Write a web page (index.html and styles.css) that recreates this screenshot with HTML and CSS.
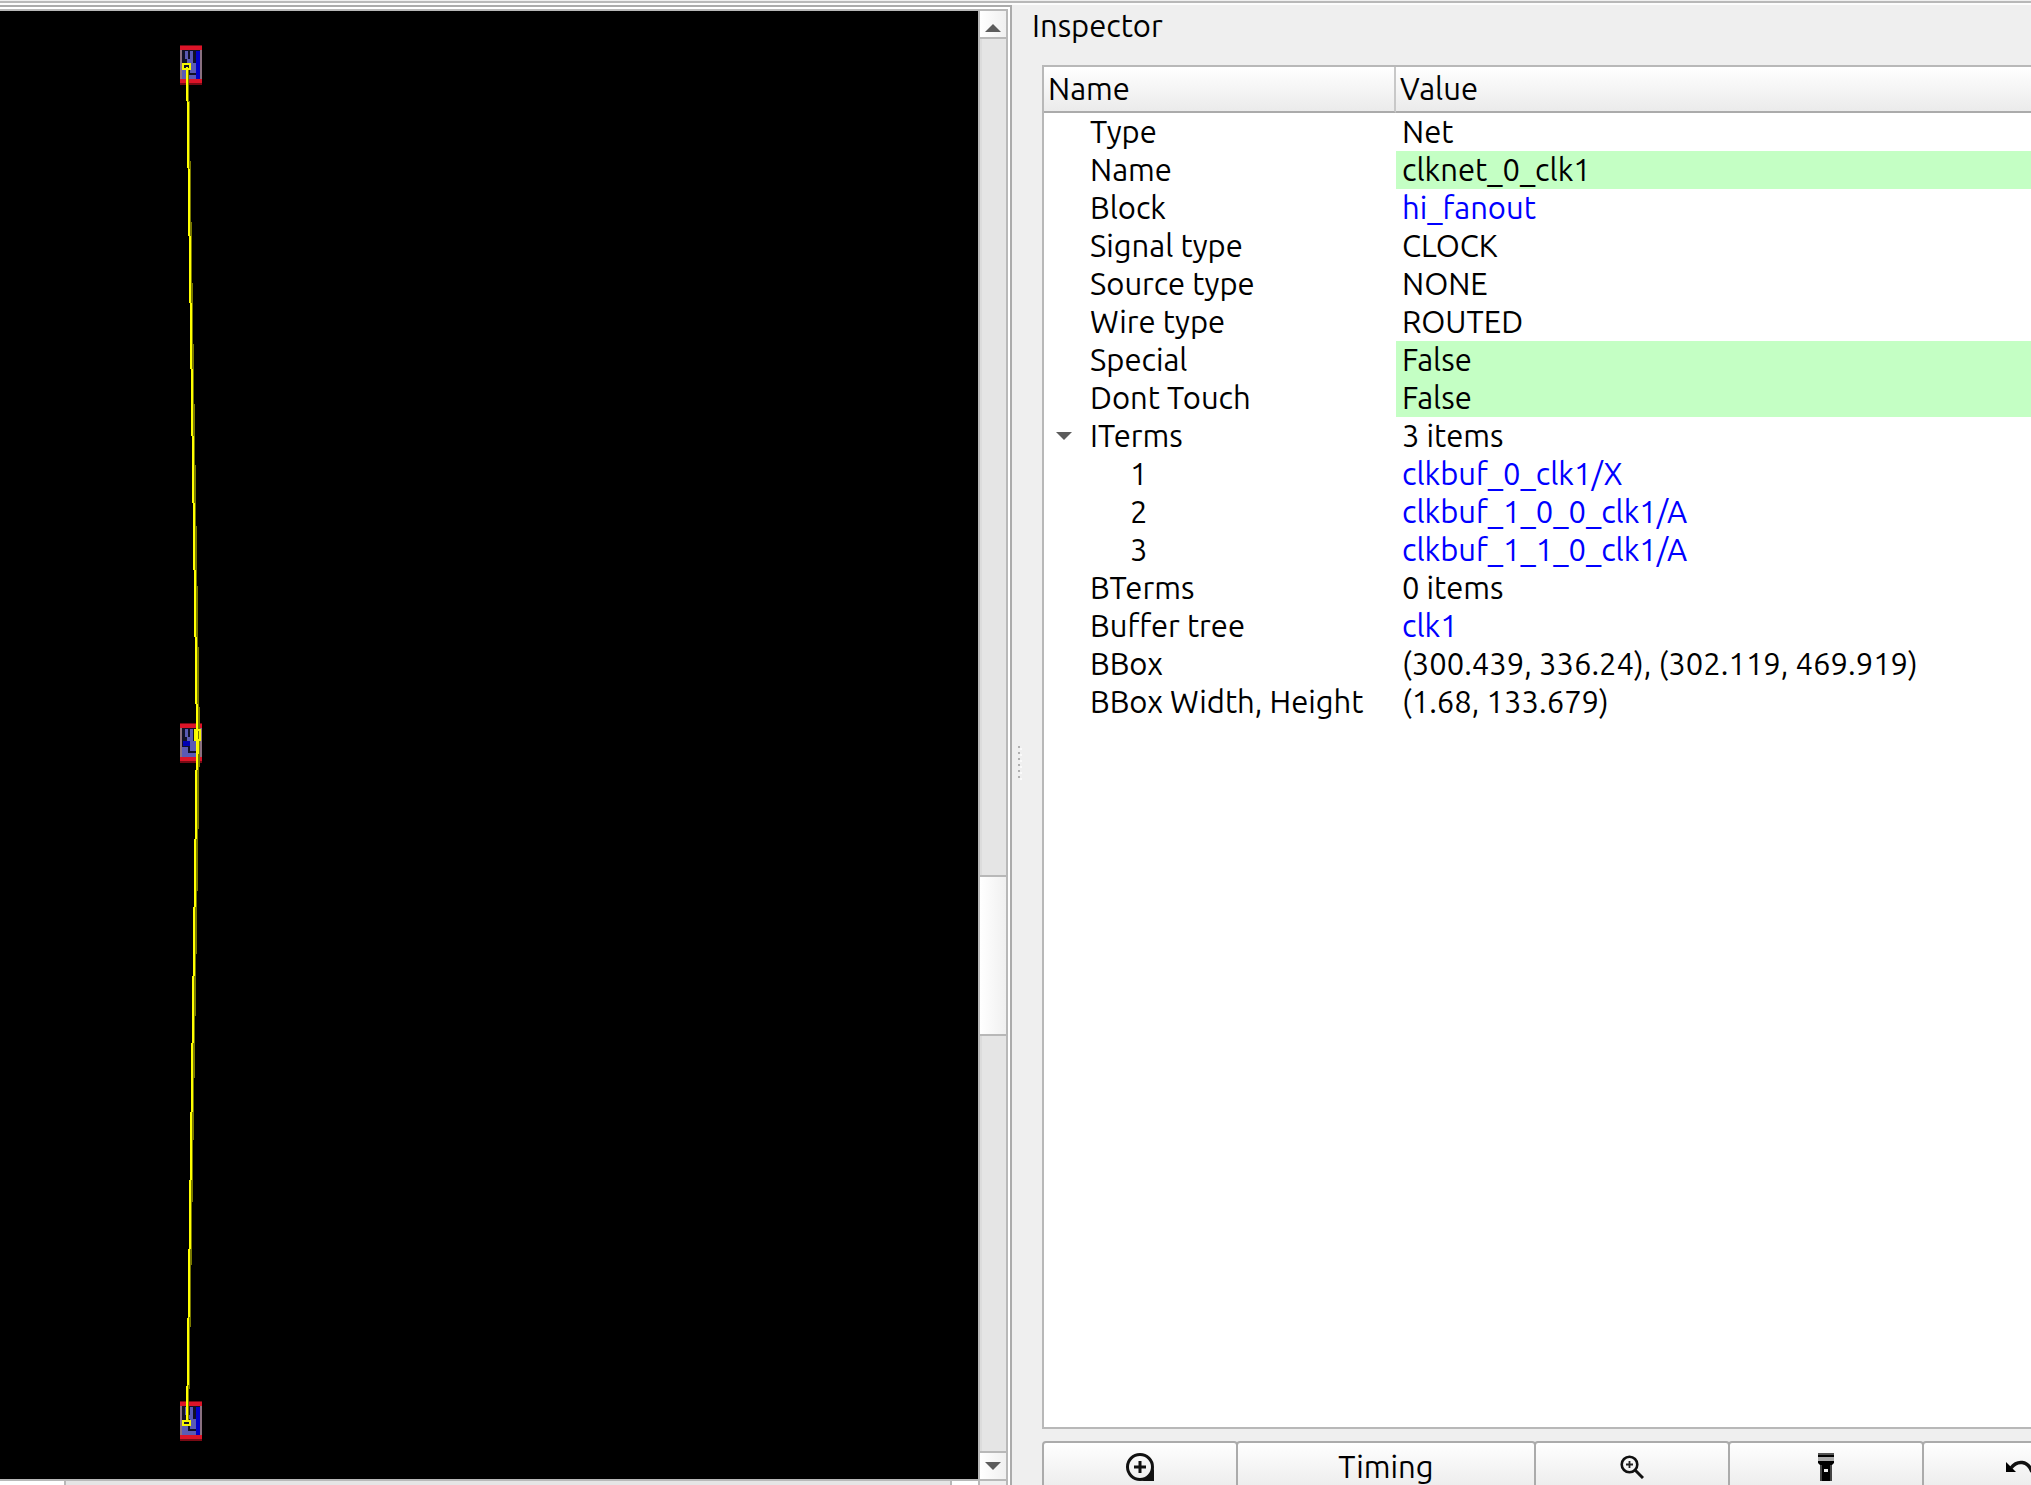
FILE: index.html
```html
<!DOCTYPE html>
<html lang="en">
<head>
<meta charset="utf-8">
<title>Inspector</title>
<link rel="stylesheet" href="styles.css">
</head>
<body>
<div class="window">
  <main class="viewer">
    <div class="viewer-frame">
      <div class="canvas">
        <svg class="layout" role="img" aria-label="Clock net layout" shape-rendering="crispEdges">
          <defs>
            <g id="cell">
              <rect width="22" height="40" fill="#8a7080"/>
              <rect x="2" y="5" width="18" height="30" fill="#101026"/>
              <path d="M5 6h3v8h-3zM10 6h3v9h-3zM7 14h6v4h-6zM10 18h6v10h-6zM2 24h6v10h-6zM8 30h8v5h-8z" fill="#5a5ab4"/>
              <path d="M0 0h22v5h-22zM0 34h22v5h-22z" fill="#dc1428"/>
              <path d="M0 0h22v1h-22zM0 38h22v2h-22z" fill="#780a14"/>
            </g>
          </defs>
          <use href="#cell" x="180" y="34"/>
          <rect x="196" y="40" width="4" height="28" fill="#0000c8"/>
          <use href="#cell" x="180" y="712"/>
          <rect x="183" y="730" width="7" height="5" fill="#0000b4"/>
          <use href="#cell" x="180" y="1390"/>
          <rect x="196" y="1396" width="4" height="28" fill="#0000c8"/>
          <path d="M188 58L199 726L188 1410" fill="none" stroke="#787800" stroke-width="2"/>
          <path d="M187 56L197 726L187 1410" fill="none" stroke="#ff0" stroke-width="2"/>
          <path d="M183 53h7v5h-7zM183 1410h7v4h-7zM195 719h5v10h-5zM198 729v14" fill="none" stroke="#f5f500" stroke-width="2"/>
        </svg>
      </div>
      <div class="vscroll" aria-hidden="true">
        <div class="step up"><svg width="16" height="8"><path d="M8 0L16 8H0z"/></svg></div>
        <div class="track before"></div>
        <div class="thumb"></div>
        <div class="track after"></div>
        <div class="step down"><svg width="16" height="8"><path d="M0 0H16L8 8z"/></svg></div>
      </div>
      <div class="hscroll" aria-hidden="true"><div class="hthumb"></div><div class="htrack"></div><div class="hstep"></div></div>
      <div class="corner"></div>
    </div>
  </main>
  <div class="splitter" aria-hidden="true"><i></i><i></i><i></i><i></i><i></i><i></i></div>
  <aside class="inspector">
    <h1 class="title">Inspector</h1>
    <div class="tree">
      <table class="props">
        <colgroup><col class="col-name"><col></colgroup>
        <thead><tr><th scope="col">Name</th><th scope="col">Value</th></tr></thead>
        <tbody>
          <tr><td>Type</td><td>Net</td></tr>
          <tr><td>Name</td><td class="editable">clknet_0_clk1</td></tr>
          <tr><td>Block</td><td><a href="#block">hi_fanout</a></td></tr>
          <tr><td>Signal type</td><td>CLOCK</td></tr>
          <tr><td>Source type</td><td>NONE</td></tr>
          <tr><td>Wire type</td><td>ROUTED</td></tr>
          <tr><td>Special</td><td class="editable">False</td></tr>
          <tr><td>Dont Touch</td><td class="editable">False</td></tr>
          <tr><td class="parent"><button class="toggle" aria-label="Collapse ITerms"><svg width="16" height="8"><path d="M0 0H16L8 8z"/></svg></button>ITerms</td><td>3 items</td></tr>
          <tr><td class="child">1</td><td><a href="#iterm1">clkbuf_0_clk1/X</a></td></tr>
          <tr><td class="child">2</td><td><a href="#iterm2">clkbuf_1_0_0_clk1/A</a></td></tr>
          <tr><td class="child">3</td><td><a href="#iterm3">clkbuf_1_1_0_clk1/A</a></td></tr>
          <tr><td>BTerms</td><td>0 items</td></tr>
          <tr><td>Buffer tree</td><td><a href="#clk1">clk1</a></td></tr>
          <tr><td>BBox</td><td>(300.439, 336.24), (302.119, 469.919)</td></tr>
          <tr><td>BBox Width, Height</td><td>(1.68, 133.679)</td></tr>
        </tbody>
      </table>
    </div>
    <div class="actions">
      <button class="action" aria-label="Zoom to"><svg width="28" height="28" viewBox="0 0 28 28"><path d="M14 1.500A12.500 12.500 0 1 0 14 26.500A12.500 12.500 0 0 0 14 1.500M14 8v12M8 14h12" fill="none" stroke="#111" stroke-width="3"/><path d="M28 14v14H14C21 27 27 21 28 14z" fill="#111"/></svg></button>
      <button class="action wide">Timing</button>
      <button class="action" aria-label="Zoom in"><svg width="24" height="24" viewBox="0 0 24 24"><circle cx="9.500" cy="9.500" r="7.800" fill="none" stroke="#111" stroke-width="2.600"/><path d="M9.500 6v7M6 9.500h7" stroke="#222" stroke-width="1.800"/><path d="M15 15l8 8" stroke="#111" stroke-width="3"/></svg></button>
      <button class="action" aria-label="Highlight"><svg width="16" height="28" viewBox="0 0 16 28"><path d="M0 0h16v2H0z" fill="#555"/><path d="M0 2h16v2H0z"/><path d="M0 4h16v4H0z" fill="#aaa"/><path d="M0 8h16v2l-2 2v16H2V12L0 10z"/><path d="M2 12h2v16H2zM12 12h2v16h-2z" fill="#444"/><path d="M6 16h4v3H6z" fill="#eee"/></svg></button>
      <button class="action" aria-label="Back"><svg width="28" height="14" viewBox="0 0 28 14"><path d="M0 2v10h10z"/><path d="M5 8C11 0 22 0 26 12" fill="none" stroke="#111" stroke-width="3.500"/></svg></button>
    </div>
  </aside>
</div>
</body>
</html>
```
FILE: styles.css
```css
* { box-sizing: border-box; }
body {
  margin: 0;
  background: #efefef;
  color: #000;
  font-family: Ubuntu, "Noto Sans", sans-serif;
  font-size: 31px;
  line-height: 38px;
}
.window {
  display: grid;
  grid-template-columns: minmax(0, 1012fr) 30px minmax(0, 989fr);
  height: 100vh;
  overflow: hidden;
  border-top: 1px solid #efefef;
  box-shadow: inset 0 2px #b8b8b8, inset 0 4px #fcfcfc;
}
.viewer {
  display: flex;
  margin-top: 4px;
  border: solid #ababab;
  border-width: 2px 2px 0 0;
  background: #fff;
  min-height: 0;
}
.viewer-frame {
  flex: 1;
  display: grid;
  grid-template-columns: minmax(0, 1fr) 30px;
  grid-template-rows: minmax(0, 1fr) 6px;
  margin: 2px 2px 0 0;
  border-top: 2px solid #b8b8b8;
}
.canvas { background: #000; min-height: 0; }
.layout { display: block; width: 100%; height: 100%; }
.vscroll {
  display: flex;
  flex-direction: column;
  border: solid #b8b8b8;
  border-width: 0 2px;
}
.step {
  flex: none;
  display: flex;
  align-items: center;
  justify-content: center;
  height: 28px;
  background: linear-gradient(90deg, #fff, #f0f0f0);
}
.step svg, .toggle svg { display: block; fill: #5c5c5c; }
.up { border-bottom: 2px solid #b8b8b8; padding-top: 8px; }
.down { border-top: 2px solid #b8b8b8; }
.track { background: #e5e5e5; border-left: 2px solid #dcdcdc; }
.before { flex: 838; }
.after { flex: 416; }
.thumb {
  flex: 158;
  border: solid #b8b8b8;
  border-width: 2px 0;
  background: linear-gradient(90deg, #fff, #f0f0f0);
}
.hscroll { display: flex; border-top: 2px solid #b8b8b8; }
.hthumb { flex: 64; background: #fff; border-right: 2px solid #b8b8b8; }
.htrack { flex: 888; background: #e5e5e5; }
.hstep { flex: 26; background: #fff; border-left: 2px solid #b8b8b8; }
.corner { border: 2px solid #b8b8b8; border-bottom: 0; background: #efefef; }
.splitter {
  display: flex;
  flex-direction: column;
  justify-content: center;
  gap: 4px;
  padding: 38px 0 0 6px;
}
.splitter i { width: 2px; height: 2px; background: #b0b0b0; box-shadow: 2px 2px #fafafa; }
.inspector {
  display: flex;
  flex-direction: column;
  min-height: 0;
}
.title {
  margin: 6px 0 20px -10px;
  font-size: 31px;
  font-weight: 400;
  line-height: 38px;
}
.tree {
  flex: 1;
  min-height: 0;
  border: solid #b8b8b8;
  border-width: 2px 0 2px 2px;
  background: #fff;
}
.props {
  width: 100%;
  table-layout: fixed;
  border-collapse: separate;
  border-spacing: 0;
  white-space: nowrap;
}
.col-name { width: 352px; }
.props th {
  height: 46px;
  padding: 0 4px;
  border-bottom: 2px solid #ababab;
  background: linear-gradient(#fff, #f5f5f5 50%, #ebebeb);
  font-weight: 400;
  text-align: left;
}
.props th:first-child { border-right: 2px solid #c8c8c8; }
.props td { height: 38px; padding: 0 0 0 6px; }
.props td:first-child { padding-left: 46px; }
.props td.child { padding-left: 86px; }
.props td.editable { background: #c4ffc4; }
.props td.parent { position: relative; }
.props a { color: #00f; text-decoration: none; }
.toggle {
  position: absolute;
  left: 12px;
  top: 15px;
  padding: 0;
  border: 0;
  background: none;
}
.actions {
  flex: none;
  display: flex;
  height: 44px;
  margin-top: 12px;
  overflow: hidden;
}
.action {
  flex: none;
  display: flex;
  align-items: center;
  justify-content: center;
  width: 196px;
  height: 52px;
  padding: 0;
  border: 2px solid #ababab;
  border-radius: 4px;
  background: linear-gradient(#fff, #ebebeb);
  color: #000;
  font: inherit;
}
.action + .action { margin-left: -2px; }
.wide { width: 300px; }
```
